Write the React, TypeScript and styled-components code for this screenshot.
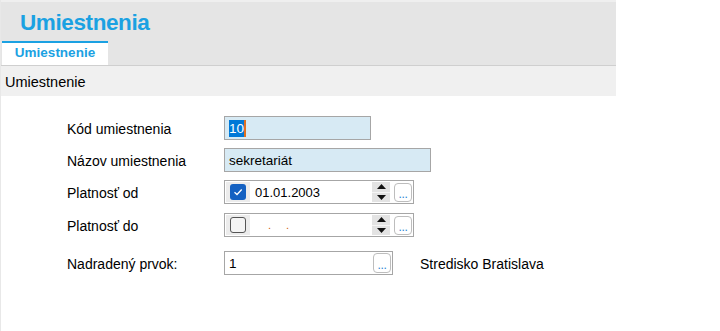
import React from "react";
import styled, { createGlobalStyle } from "styled-components";

const GlobalStyle = createGlobalStyle`
  html, body {
    margin: 0;
    padding: 0;
    background: #ffffff;
  }
  body {
    font-family: "Liberation Sans", Arial, sans-serif;
    color: #000000;
  }
`;

const Page = styled.div`
  width: 720px;
  height: 331px;
  overflow: hidden;
  border-left: 1px solid #e8e8e8;
  box-sizing: border-box;
`;

const TopStrip = styled.div`
  width: 615px;
  height: 2px;
  background: #efefef;
`;

const Header = styled.div`
  width: 615px;
  height: 63px;
  background: #e5e5e5;
  display: flex;
  flex-direction: column;
  border-bottom: 1px solid #cfcfcf;
`;

const Title = styled.div`
  height: 39px;
  padding-left: 19px;
  font-size: 22.5px;
  font-weight: 700;
  line-height: 42px;
  color: #1ba1e2;
  letter-spacing: -0.4px;
`;

const Tabs = styled.div`
  display: flex;
  padding-left: 1px;
  margin-top: auto;
`;

const Tab = styled.div<{ $active?: boolean }>`
  width: 106px;
  height: 22px;
  border-top: 2px solid ${(p) => (p.$active ? "#1ba1e2" : "transparent")};
  background: ${(p) => (p.$active ? "#ffffff" : "transparent")};
  color: #1ba1e2;
  font-size: 13.5px;
  font-weight: 700;
  line-height: 19px;
  text-align: center;
`;

const Section = styled.div`
  width: 615px;
  height: 30px;
  background: #f0f0f0;
  padding-left: 4px;
  box-sizing: border-box;
  font-size: 14.5px;
  line-height: 32px;
`;

const Form = styled.div`
  display: grid;
  grid-template-columns: 157px auto;
  row-gap: 8px;
  padding: 20px 0 0 66px;
  align-items: center;
`;

const Label = styled.div<{ $gapTop?: number }>`
  font-size: 14px;
  padding-top: 2px;
  margin-top: ${(p) => p.$gapTop ?? 0}px;
`;

const Cell = styled.div<{ $gapTop?: number }>`
  display: flex;
  align-items: center;
  margin-top: ${(p) => p.$gapTop ?? 0}px;
`;

const TextBox = styled.div<{ $w: number; $tinted?: boolean }>`
  width: ${(p) => p.$w}px;
  height: 24px;
  box-sizing: border-box;
  border: 1px solid #a6a6a6;
  background: ${(p) => (p.$tinted ? "#d7eaf4" : "#ffffff")};
  display: flex;
  align-items: center;
  padding: 0 1px 0 4px;
  font-size: 13.5px;
`;

const Selected = styled.span`
  background: #0078d7;
  color: #ffffff;
  padding: 1px 0;
  border-right: 2px solid #e07020;
`;

const DateBox = styled.div`
  width: 190px;
  height: 24px;
  box-sizing: border-box;
  border: 1px solid #a6a6a6;
  background: #ffffff;
  display: flex;
  align-items: center;
  padding: 1px;
  font-size: 13px;
`;

const CheckArea = styled.div`
  width: 24px;
  height: 20px;
  background: #ececec;
  display: flex;
  align-items: center;
  justify-content: center;
`;

const Check = styled.div<{ $on?: boolean }>`
  width: 16px;
  height: 16px;
  box-sizing: border-box;
  border-radius: 3px;
  border: ${(p) => (p.$on ? "none" : "1.5px solid #555555")};
  background: ${(p) => (p.$on ? "#1461c2" : "#f4f4f4")};
  display: flex;
  align-items: center;
  justify-content: center;
`;

const DateText = styled.span`
  margin-left: 5px;
  flex: 1;
`;

const EmptyDate = styled.span`
  margin-left: 18px;
  flex: 1;
  display: flex;
  gap: 15px;
  font-size: 11px;
  color: #d06010;
`;

const Spinner = styled.div`
  width: 18px;
  height: 20px;
  display: flex;
  flex-direction: column;
  gap: 1px;
  background: #f5f5f5;
`;

const SpinHalf = styled.div`
  flex: 1;
  background: #e3e3e3;
  display: flex;
  align-items: center;
  justify-content: center;
`;

const DotsButton = styled.div<{ $h?: number }>`
  width: 18px;
  height: ${(p) => p.$h ?? 19}px;
  margin-left: 4px;
  box-sizing: border-box;
  border: 1px solid #bdbdbd;
  border-radius: 4px;
  background: #ffffff;
  display: flex;
  align-items: flex-end;
  justify-content: center;
  font-size: 12px;
  line-height: 13px;
  color: #2a7fd4;
  letter-spacing: -0.3px;
`;

const Note = styled.span`
  margin-left: 27px;
  font-size: 14px;
  padding-top: 2px;
`;

const Arrow = ({ up }: { up?: boolean }) => (
  <svg width="9" height="5" viewBox="0 0 9 5">
    <path d={up ? "M0 5 L4.5 0 L9 5 Z" : "M0 0 L4.5 5 L9 0 Z"} fill="#111" />
  </svg>
);

const Tick = () => (
  <svg width="10" height="8" viewBox="0 0 10 8">
    <path d="M1.5 4.2 L4 6.5 L8.7 1.5" stroke="#fff" strokeWidth="1.3" fill="none" />
  </svg>
);

const DateSpinner = () => (
  <Spinner>
    <SpinHalf>
      <Arrow up />
    </SpinHalf>
    <SpinHalf>
      <Arrow />
    </SpinHalf>
  </Spinner>
);

const App: React.FC = () => {
  return (
    <Page>
      <GlobalStyle />
      <TopStrip />
      <Header>
        <Title>Umiestnenia</Title>
        <Tabs>
          <Tab $active>Umiestnenie</Tab>
        </Tabs>
      </Header>
      <Section>Umiestnenie</Section>
      <Form>
        <Label>Kód umiestnenia</Label>
        <Cell>
          <TextBox $w={147} $tinted>
            <Selected>10</Selected>
          </TextBox>
        </Cell>

        <Label>Názov umiestnenia</Label>
        <Cell>
          <TextBox $w={207} $tinted>sekretariát</TextBox>
        </Cell>

        <Label>Platnosť od</Label>
        <Cell>
          <DateBox>
            <CheckArea>
              <Check $on>
                <Tick />
              </Check>
            </CheckArea>
            <DateText>01.01.2003</DateText>
            <DateSpinner />
            <DotsButton>...</DotsButton>
          </DateBox>
        </Cell>

        <Label $gapTop={1}>Platnosť do</Label>
        <Cell $gapTop={1}>
          <DateBox>
            <CheckArea>
              <Check />
            </CheckArea>
            <EmptyDate>
              <span>.</span>
              <span>.</span>
            </EmptyDate>
            <DateSpinner />
            <DotsButton>...</DotsButton>
          </DateBox>
        </Cell>

        <Label $gapTop={6}>Nadradený prvok:</Label>
        <Cell $gapTop={6}>
          <TextBox $w={169}>
            <span style={{ flex: 1 }}>1</span>
            <DotsButton $h={20}>...</DotsButton>
          </TextBox>
          <Note>Stredisko Bratislava</Note>
        </Cell>
      </Form>
    </Page>
  );
};

export default App;
